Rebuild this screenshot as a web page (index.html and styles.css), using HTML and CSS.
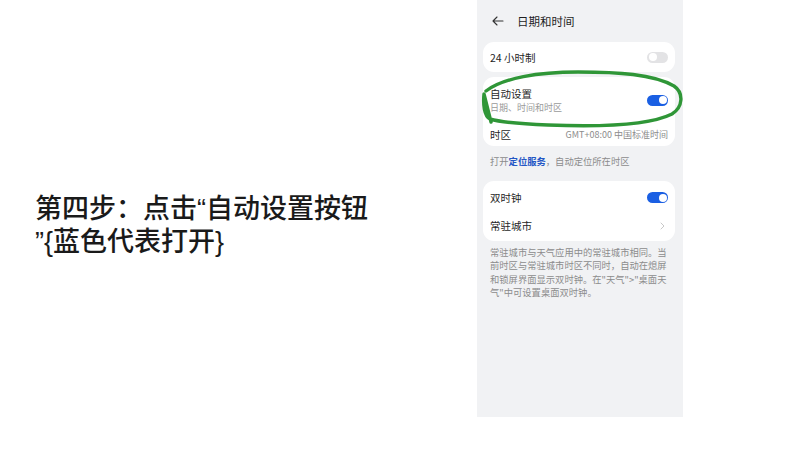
FILE: index.html
```html
<!DOCTYPE html>
<html>
<head>
    <meta charset="utf-8">
    <title>第四步</title>
    <link rel="stylesheet" href="styles.css">
</head>
<body>
    <div class="page">
        <div class="step">
            <p class="step-text">第四步：点击“自动设置按钮<br>”{蓝色代表打开}</p>
        </div>

        <div class="phone">
            <div class="header">
                <svg class="back" width="12" height="10" viewBox="0 0 12 10">
                    <path d="M11 5H1.2M5 1L1 5l4 4" fill="none" stroke="#333" stroke-width="1.1" stroke-linecap="round" stroke-linejoin="round"/>
                </svg>
                <span class="title">日期和时间</span>
            </div>

            <div class="card">
                <div class="row">
                    <span class="label">24 小时制</span>
                    <span class="switch"></span>
                </div>
            </div>

            <div class="card card-gap">
                <div class="row row-tall">
                    <div class="label-group">
                        <span class="label">自动设置</span>
                        <span class="sub">日期、时间和时区</span>
                    </div>
                    <span class="switch on"></span>
                </div>
                <div class="row row-short">
                    <span class="label">时区</span>
                    <span class="value">GMT+08:00 中国标准时间</span>
                </div>
            </div>

            <p class="note">打开<span class="link">定位服务</span>，自动定位所在时区</p>

            <div class="card card-pad">
                <div class="row">
                    <span class="label">双时钟</span>
                    <span class="switch on"></span>
                </div>
                <div class="row">
                    <span class="label">常驻城市</span>
                    <svg class="chevron" width="5" height="8" viewBox="0 0 5 8">
                        <path d="M1 1l3 3-3 3" fill="none" stroke="#c8c8c8" stroke-width="1" stroke-linecap="round" stroke-linejoin="round"/>
                    </svg>
                </div>
            </div>

            <p class="note note-long">常驻城市与天气应用中的常驻城市相同。当前时区与常驻城市时区不同时，自动在熄屏和锁屏界面显示双时钟。在"天气">"桌面天气"中可设置桌面双时钟。</p>

            <svg class="circle" width="206" height="70" viewBox="0 0 206 70">
                <path d="M8 27 C 25 14, 60 8, 100 8 C 140 8, 175 10, 196 22 C 206 29, 205 43, 194 50 C 170 62, 120 63, 70 61 C 45 60, 22 58, 12 55 C 6 52, 5 40, 6 30 L 13 58" fill="none" stroke="#2f9637" stroke-width="3.4" stroke-linecap="round" stroke-linejoin="round"/>
            </svg>
        </div>
    </div>
</body>
</html>
```

FILE: styles.css
```css
body {
    margin: 0;
    background: #ffffff;
}

.page {
    display: flex;
    align-items: flex-start;
    width: 800px;
    height: 450px;
}

.step {
    width: 442px;
    padding: 193px 0 0 35px;
}

.step-text {
    margin: 0;
    font-family: "Liberation Sans", "Noto Sans CJK SC", sans-serif;
    font-size: 27px;
    font-weight: 500;
    line-height: 33px;
    color: #1a1a1a;
}

.phone {
    position: relative;
    width: 192px;
    height: 417px;
    padding: 0 8px 0 6px;
    background: #f1f2f4;
    font-family: "Noto Sans CJK SC", sans-serif;
    color: #1f1f1f;
}

.header {
    display: flex;
    align-items: center;
    height: 42px;
    padding-left: 9px;
}

.back {
    margin-right: 13px;
}

.title {
    font-size: 11.5px;
}

.card {
    background: #ffffff;
    border-radius: 11px;
    padding: 1px 7px;
}

.card-gap {
    margin-top: 5px;
    padding: 0 7px;
}

.card-pad {
    padding: 3px 7px 1px;
}

.row {
    display: flex;
    align-items: center;
    justify-content: space-between;
    height: 28px;
}

.row-tall {
    height: 44px;
    padding-top: 1px;
}

.row-short {
    height: 24px;
}

.label-group {
    display: flex;
    flex-direction: column;
}

.label {
    font-size: 10.5px;
}

.sub {
    font-size: 9px;
    color: #9a9a9a;
}

.value {
    font-size: 9px;
    color: #8c8c8c;
}

.switch {
    position: relative;
    width: 21px;
    height: 11px;
    border-radius: 6px;
    background: #e3e3e5;
}

.switch::after {
    content: "";
    position: absolute;
    top: 1.5px;
    left: 1.5px;
    width: 8px;
    height: 8px;
    border-radius: 50%;
    background: #ffffff;
}

.switch.on {
    background: #1a5fe3;
}

.switch.on::after {
    left: auto;
    right: 1.5px;
}

.chevron {
    margin-right: 3px;
}

.note {
    margin: 0;
    padding: 9px 7px 12px;
    font-size: 9.3px;
    line-height: 13.5px;
    color: #8c8c8c;
}

.note .link {
    color: #2457c5;
    font-weight: bold;
}

.note-long {
    padding: 5px 6px 0 7px;
}

.circle {
    position: absolute;
    left: 1px;
    top: 64px;
}
```
